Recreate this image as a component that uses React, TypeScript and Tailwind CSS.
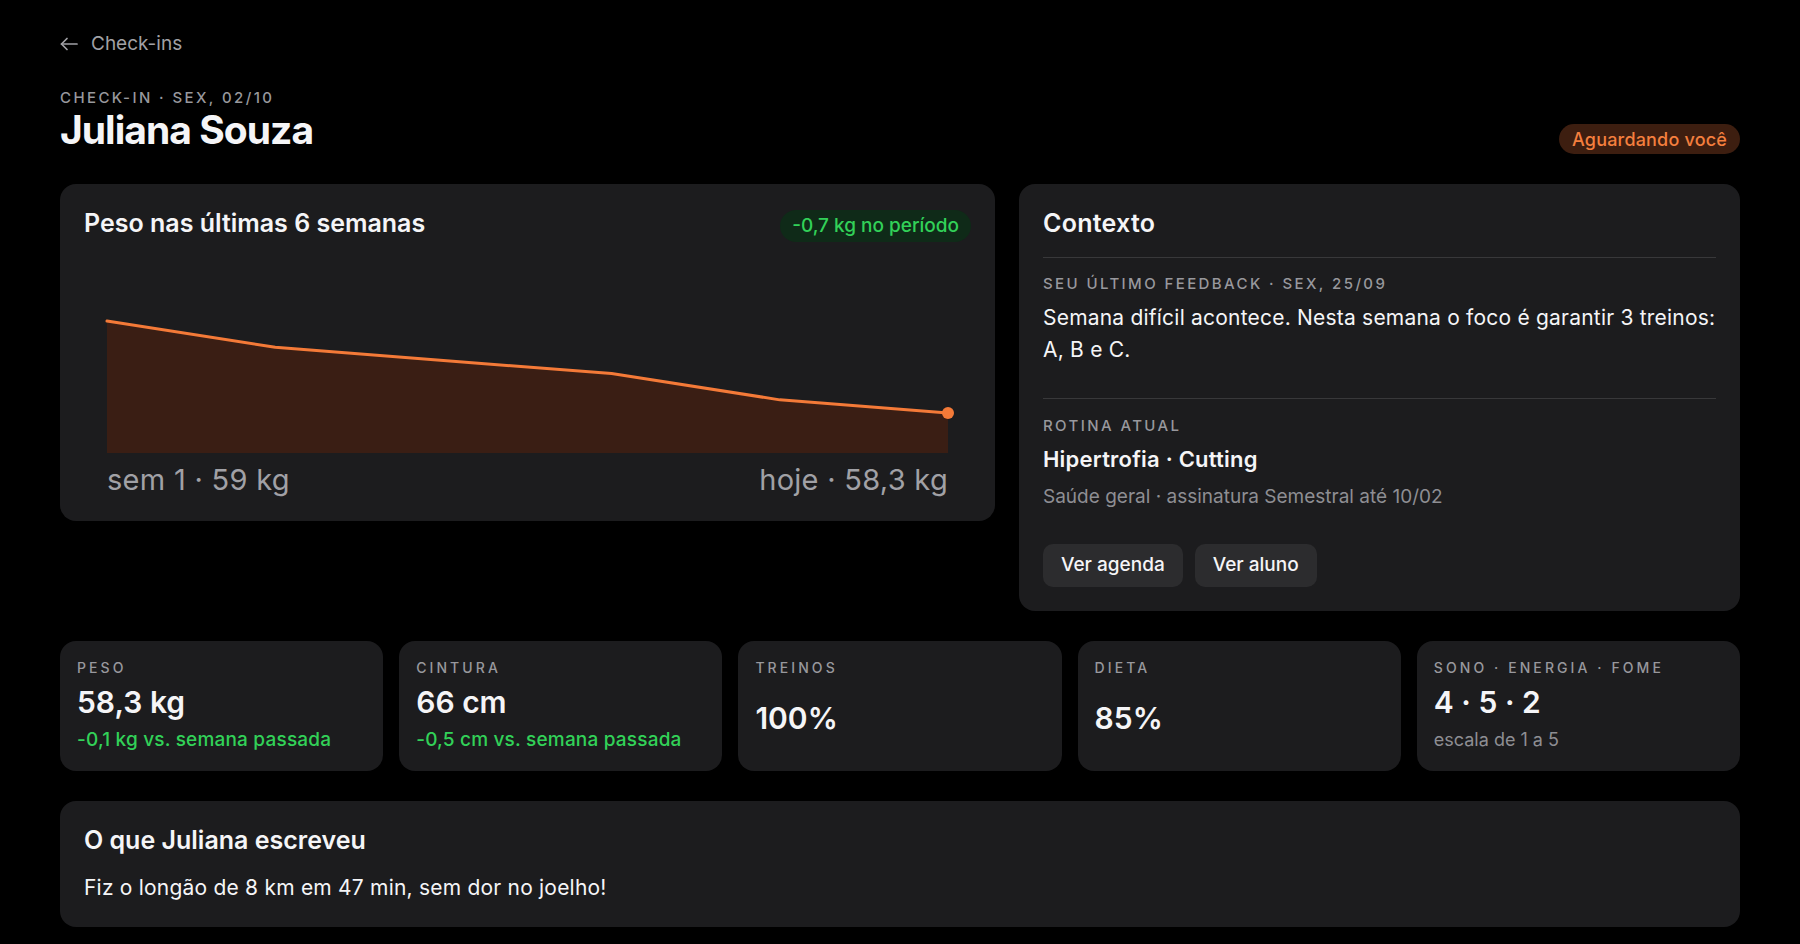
import React from 'react';

type Stat = {
    label: string;
    value: string;
    sub?: string;
    subTone?: 'green' | 'gray';
};

const stats: Stat[] = [
    { label: 'Peso', value: '58,3 kg', sub: '-0,1 kg vs. semana passada', subTone: 'green' },
    { label: 'Cintura', value: '66 cm', sub: '-0,5 cm vs. semana passada', subTone: 'green' },
    { label: 'Treinos', value: '100%' },
    { label: 'Dieta', value: '85%' },
    { label: 'Sono · Energia · Fome', value: '4 · 5 · 2', sub: 'escala de 1 a 5', subTone: 'gray' },
];

// weekly weights, week 1 -> today
const weights = [59, 58.8, 58.7, 58.6, 58.4, 58.3];

function WeightChart() {
    const w = 841;
    const h = 200;
    const base = 199;
    const top = 67;
    const pxPerKg = (159 - top) / (weights[0] - weights[weights.length - 1]);
    const pts = weights.map((kg, i) => {
        const x = (w / (weights.length - 1)) * i;
        const y = top + (weights[0] - kg) * pxPerKg;
        return [x, y];
    });
    const line = pts.map(([x, y]) => `${x},${y}`).join(' ');
    const area = `0,${base} ${line} ${w},${base}`;
    const last = pts[pts.length - 1];

    return (
        <svg width={w} height={h} viewBox={`0 0 ${w} ${h}`} className="block overflow-visible">
            <polygon points={area} fill="#3a1e14" />
            <polyline points={line} fill="none" stroke="#f47a38" strokeWidth={3} strokeLinejoin="round" strokeLinecap="round" />
            <circle cx={last[0]} cy={last[1]} r={6} fill="#f47a38" />
        </svg>
    );
}

function StatCard({ stat }: { stat: Stat }) {
    return (
        <div className="bg-[#1c1c1e] rounded-2xl h-[130px] px-[17px] pt-[17px] pb-[18px] flex flex-col">
            <div className="text-[14px] leading-5 font-medium uppercase tracking-[0.22em] text-[#98989d]">
                {stat.label}
            </div>
            <div className="flex-1 mt-[4px] flex flex-col justify-center">
                <div className="text-[30px] leading-9 font-semibold text-[#f5f5f7]">{stat.value}</div>
                {stat.sub && (
                    <div
                        className={
                            stat.subTone === 'green'
                                ? 'mt-[8px] text-[19px] leading-6 font-medium tracking-[0.01em] text-[#32d158]'
                                : 'mt-[8px] text-[18px] leading-6 text-[#8e8e93]'
                        }
                    >
                        {stat.sub}
                    </div>
                )}
            </div>
        </div>
    );
}

export default function App() {
    return (
        <div
            className="min-h-screen bg-black text-[#f5f5f7] px-[60px] pt-[32px] pb-8"
            style={{ fontFamily: 'Inter, "Noto Sans", sans-serif' }}
        >
            {/* Back link */}
            <div className="flex items-center gap-[13px] text-[19px] leading-6 text-[#a1a1a6]">
                <svg width="18" height="14" viewBox="0 0 18 14" fill="none" stroke="#a1a1a6" strokeWidth="1.7" strokeLinecap="round" strokeLinejoin="round">
                    <path d="M17 7H1.5" />
                    <path d="M7 1.5 1.5 7 7 12.5" />
                </svg>
                <span>Check-ins</span>
            </div>

            {/* Header */}
            <div className="mt-[32px] flex items-end justify-between">
                <div>
                    <div className="text-[15px] leading-5 font-medium uppercase tracking-[0.16em] text-[#98989d]">
                        Check-in · Sex, 02/10
                    </div>
                    <h1 className="text-[39px] leading-[44px] font-bold tracking-[-0.025em]">Juliana Souza</h1>
                </div>
                <div className="mb-[-2px] h-[30px] px-[13px] rounded-full bg-[#3d1e10] text-[#f47f3e] text-[18px] font-medium tracking-[0.01em] flex items-center">
                    Aguardando você
                </div>
            </div>

            {/* Chart + context */}
            <div className="mt-[32px] flex items-start gap-6">
                <div className="w-[935px] shrink-0 bg-[#1c1c1e] rounded-2xl p-6 pb-[25px]">
                    <div className="flex items-start justify-between">
                        <h2 className="text-[25px] leading-[30px] font-semibold">Peso nas últimas 6 semanas</h2>
                        <span className="mt-[2px] h-8 px-3 rounded-full bg-[#0f2a18] text-[#32d158] text-[19px] font-medium flex items-center">
                            -0,7 kg no período
                        </span>
                    </div>
                    <div className="px-[23px] mt-3">
                        <WeightChart />
                        <div className="mt-[10px] flex justify-between text-[29px] leading-8 tracking-[0.01em] text-[#a1a1a6]">
                            <span>sem 1 · 59 kg</span>
                            <span>hoje · 58,3 kg</span>
                        </div>
                    </div>
                </div>

                <div className="flex-1 bg-[#1c1c1e] rounded-2xl p-6">
                    <h2 className="text-[25px] leading-[30px] font-semibold tracking-[0.01em]">Contexto</h2>
                    <div className="mt-[19px] border-t border-[#38383a] pt-[16px] pb-8">
                        <div className="text-[15px] leading-5 font-medium uppercase tracking-[0.16em] text-[#98989d]">
                            Seu último feedback · Sex, 25/09
                        </div>
                        <p className="mt-2 text-[21px] leading-8 tracking-[0.01em] text-[#f5f5f7]">
                            Semana difícil acontece. Nesta semana o foco é garantir 3 treinos: A, B e C.
                        </p>
                    </div>
                    <div className="border-t border-[#38383a] pt-[17px]">
                        <div className="text-[15px] leading-5 font-medium uppercase tracking-[0.16em] text-[#98989d]">
                            Rotina atual
                        </div>
                        <div className="mt-2 text-[22px] leading-[30px] font-semibold tracking-[0.01em]">Hipertrofia · Cutting</div>
                        <div className="mt-[10px] text-[19px] leading-[26px] text-[#8e8e93]">
                            Saúde geral · assinatura Semestral até 10/02
                        </div>
                        <div className="mt-[34px] flex gap-3">
                            <button className="h-[43px] px-[18px] rounded-[10px] bg-[#2c2c2e] text-[19px] font-medium text-[#f5f5f7]">
                                Ver agenda
                            </button>
                            <button className="h-[43px] px-[18px] rounded-[10px] bg-[#2c2c2e] text-[19px] font-medium text-[#f5f5f7]">
                                Ver aluno
                            </button>
                        </div>
                    </div>
                </div>
            </div>

            {/* Stats */}
            <div className="mt-[30px] grid grid-cols-5 gap-4">
                {stats.map((s) => (
                    <StatCard key={s.label} stat={s} />
                ))}
            </div>

            {/* Note */}
            <div className="mt-[30px] bg-[#1c1c1e] rounded-2xl px-6 pt-[24px] pb-[25px]">
                <h2 className="text-[25px] leading-[30px] font-semibold">O que Juliana escreveu</h2>
                <p className="mt-[19px] text-[21px] leading-[28px] tracking-[0.01em] text-[#f5f5f7]">
                    Fiz o longão de 8 km em 47 min, sem dor no joelho!
                </p>
            </div>
        </div>
    );
}
